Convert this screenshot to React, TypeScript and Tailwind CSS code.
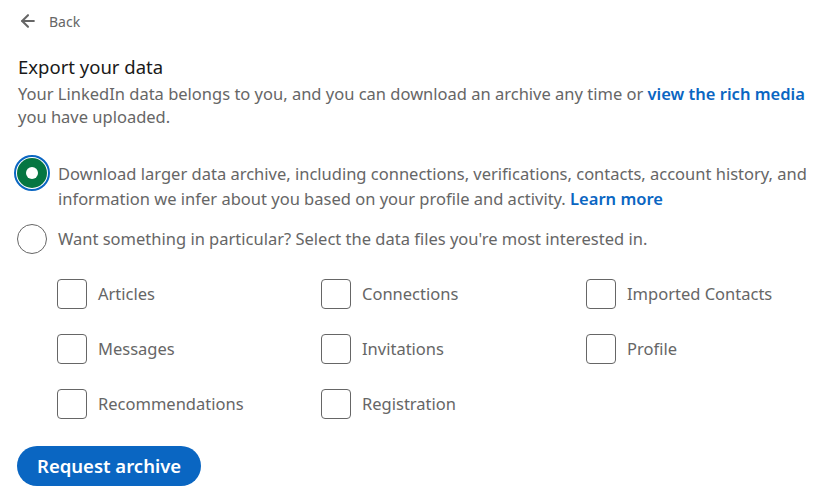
import { ArrowLeft } from "lucide-react";

const files = [
  "Articles",
  "Connections",
  "Imported Contacts",
  "Messages",
  "Invitations",
  "Profile",
  "Recommendations",
  "Registration",
];

function Checkbox({ label }: { label: string }) {
  return (
    <label className="flex h-[30px] items-center gap-[11px]">
      <span className="h-[30px] w-[30px] shrink-0 rounded-[4px] border border-[#666666] bg-white" />
      <span className="text-[16.5px] leading-[24px] text-[#666666]">{label}</span>
    </label>
  );
}

export default function App() {
  return (
    <div
      className="h-[495px] w-[827px] overflow-hidden bg-white px-[18px] pt-[11px]"
      style={{ fontFamily: '"Noto Sans", "Open Sans", sans-serif' }}
    >
      {/* Back link */}
      <button className="flex h-[20px] items-center gap-[11px] text-[#666666]">
        <ArrowLeft size={20} strokeWidth={2.5} />
        <span className="text-[14px]">Back</span>
      </button>

      <h1 className="mt-[24px] text-[18.5px] leading-[24px] text-[#191919]">Export your data</h1>
      <p className="mt-[3px] text-[16.5px] leading-[23px] text-[#666666]">
        Your LinkedIn data belongs to you, and you can download an archive any time or{" "}
        <a className="font-semibold text-[#0a66c2]">view the rich media</a> you have uploaded.
      </p>

      {/* Option 1 — selected */}
      <div className="-ml-[4px] mt-[27px] flex items-start gap-[8px]">
        <span className="flex h-[36px] w-[36px] shrink-0 items-center justify-center rounded-full border-2 border-[#0a66c2] bg-white">
          <span className="flex h-[30px] w-[30px] items-center justify-center rounded-full bg-[#057642]">
            <span className="h-[12px] w-[12px] rounded-full bg-white" />
          </span>
        </span>
        <span className="mt-[6px] text-[16.5px] leading-[25px] text-[#666666]">
          Download larger data archive, including connections, verifications, contacts, account history, and
          information we infer about you based on your profile and activity.{" "}
          <a className="font-semibold text-[#0a66c2]">Learn more</a>
        </span>
      </div>

      {/* Option 2 */}
      <div className="-ml-[4px] mt-[10px] flex items-start gap-[8px]">
        <span className="flex h-[36px] w-[36px] shrink-0 items-center justify-center">
          <span className="h-[30px] w-[30px] rounded-full border border-[#666666]" />
        </span>
        <span className="mt-[5px] text-[16.5px] leading-[25px] text-[#666666]">
          Want something in particular? Select the data files you're most interested in.
        </span>
      </div>

      <div className="mt-[22px] grid grid-cols-[264px_265px_1fr] gap-y-[25px] pl-[39px]">
        {files.map((f) => (
          <Checkbox key={f} label={f} />
        ))}
      </div>

      <button className="-ml-px mt-[27px] h-[40px] rounded-full bg-[#0a66c2] px-[20px] text-[18.5px] font-semibold text-white">
        Request archive
      </button>
    </div>
  );
}
